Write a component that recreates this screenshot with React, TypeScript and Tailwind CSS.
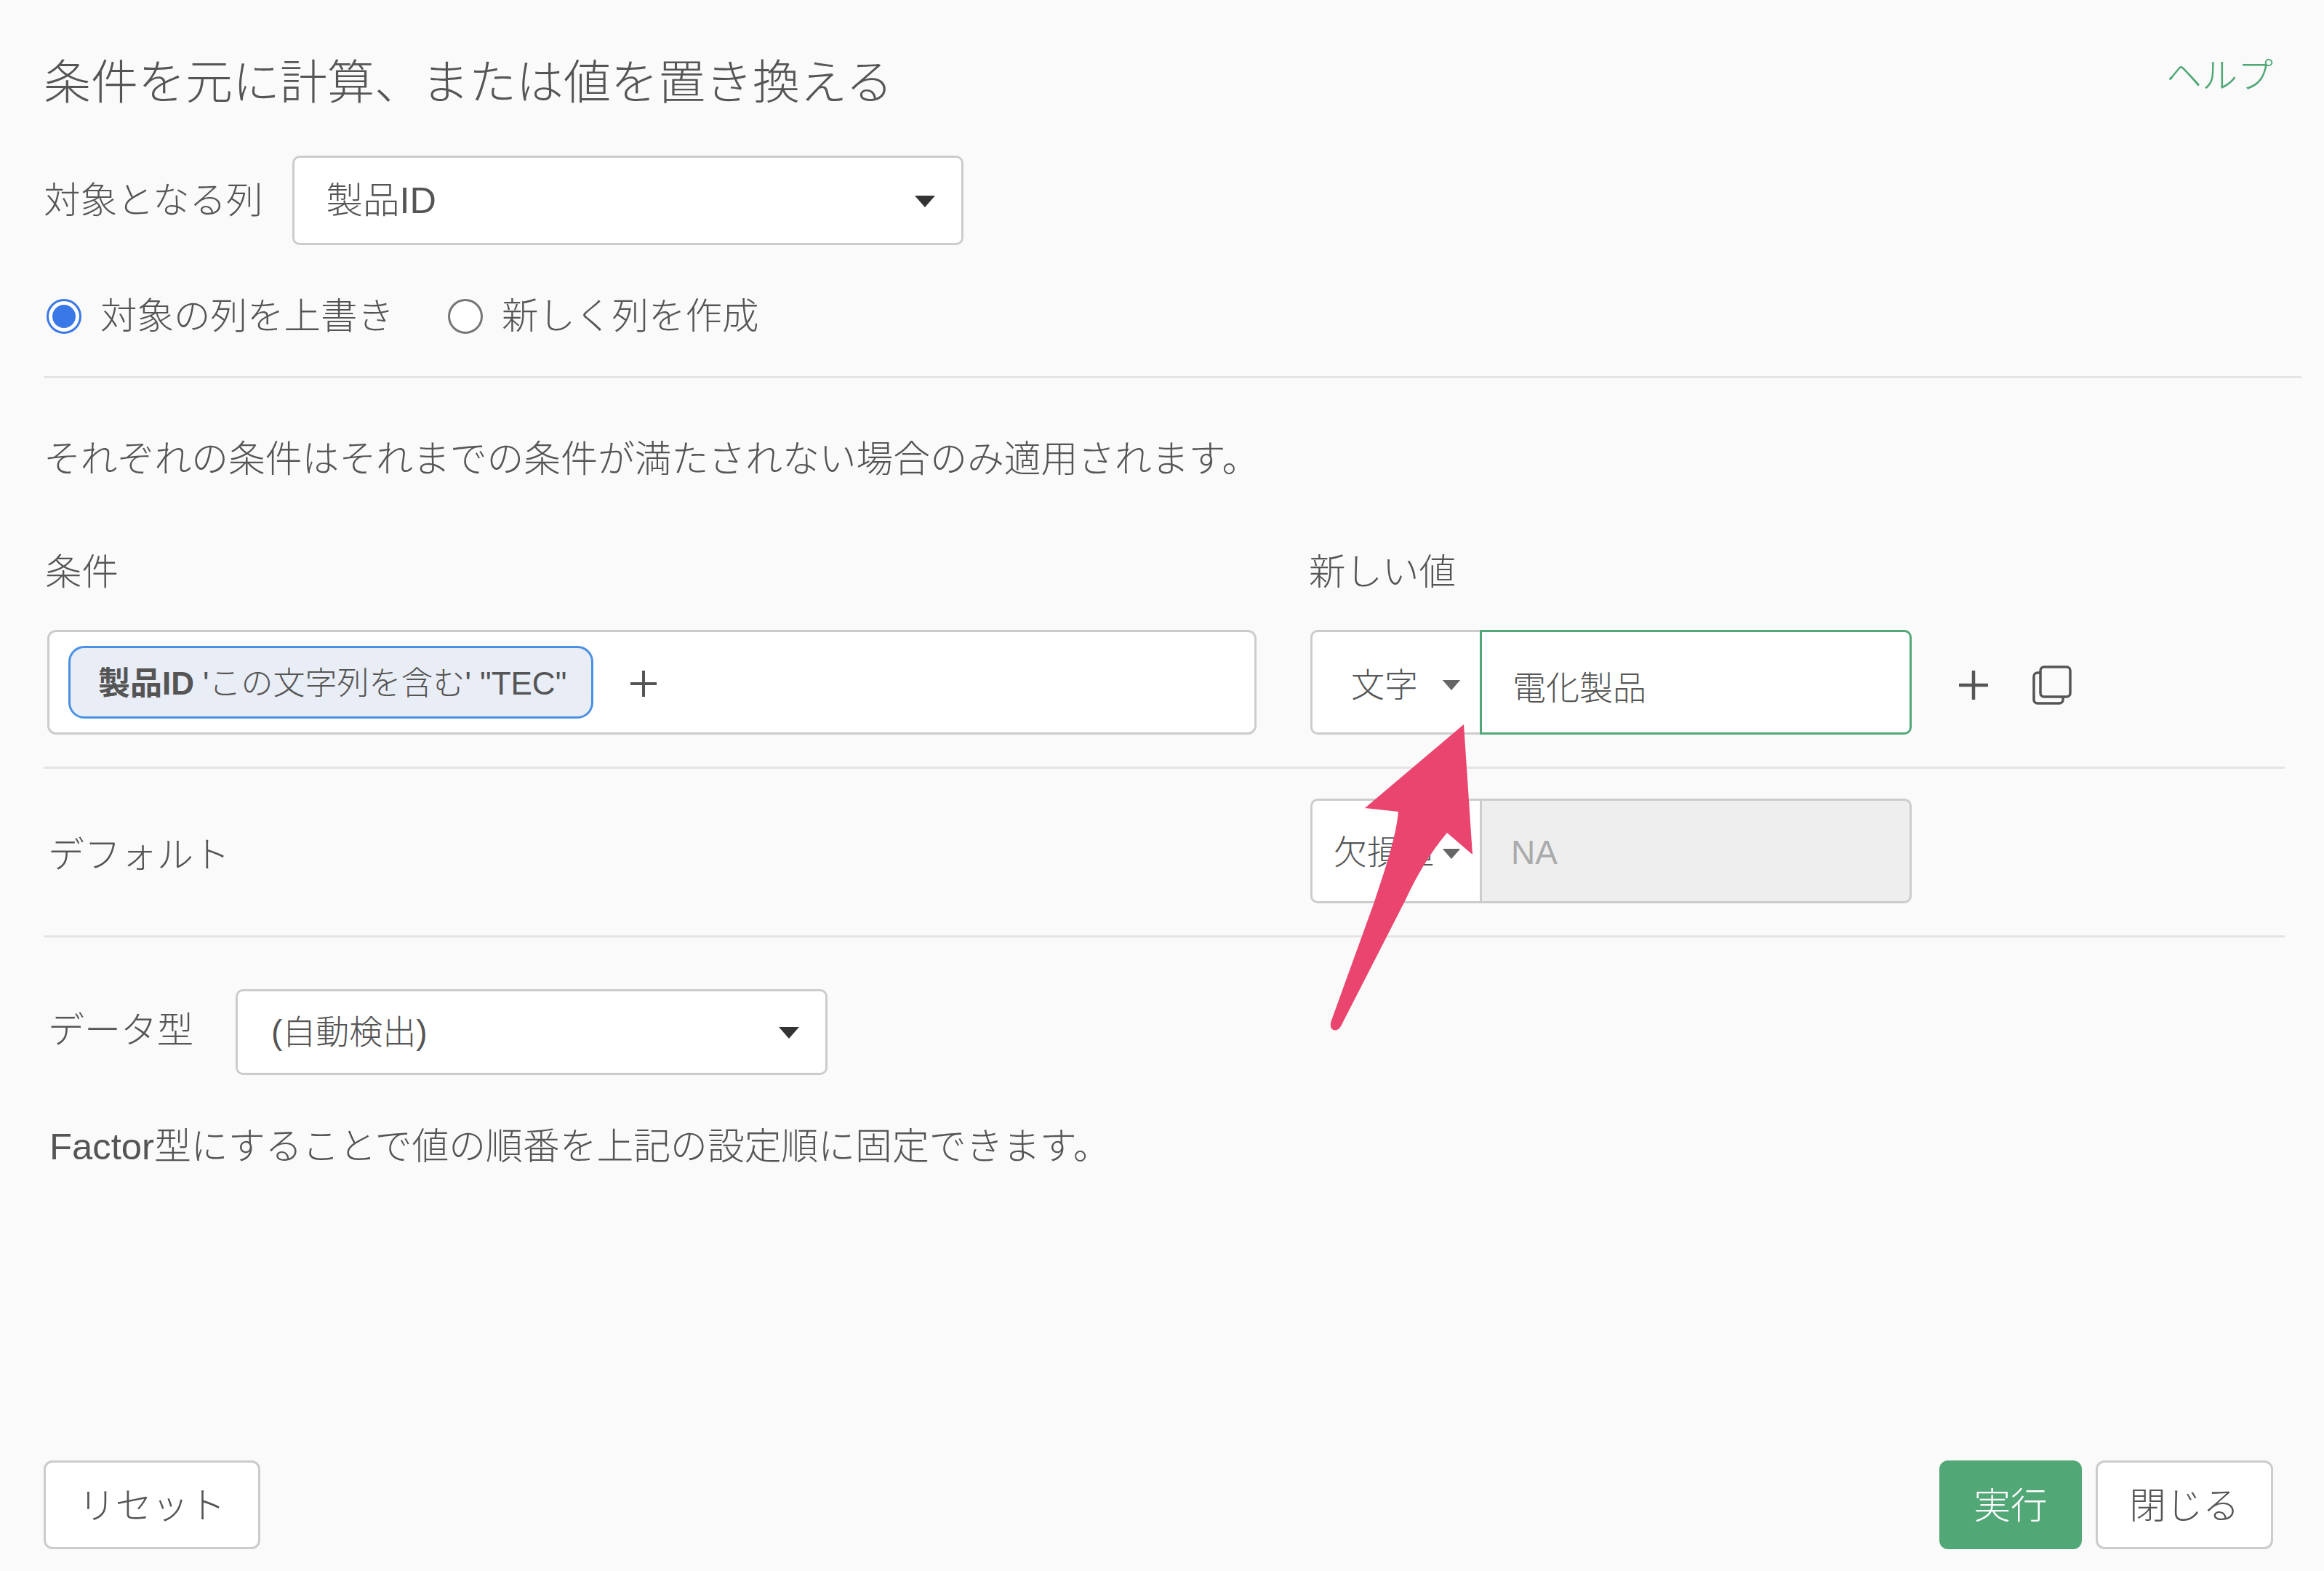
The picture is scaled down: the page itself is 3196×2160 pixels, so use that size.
import React from 'react';

const FONT = '"Liberation Sans", "Noto Sans CJK JP", sans-serif';

const Caret = ({ className = '' }: { className?: string }) => (
  <svg width="28" height="16" viewBox="0 0 28 16" className={className}>
    <polygon points="0,0 28,0 14,16" fill="currentColor" />
  </svg>
);

const Divider = ({ className = '' }: { className?: string }) => (
  <div className={`h-[3px] bg-[#e4e4e4] ${className}`} />
);

const Radio = ({ checked, label }: { checked?: boolean; label: string }) => (
  <div className="flex items-center gap-[26px]">
    <span
      className={`flex h-[48px] w-[48px] items-center justify-center rounded-full border-[3px] bg-white ${
        checked ? 'border-[#3b78e7]' : 'border-[#777777]'
      }`}
    >
      {checked && <span className="h-[32px] w-[32px] rounded-full bg-[#3b78e7]" />}
    </span>
    <span className="text-[50.5px] leading-[60px] font-light">{label}</span>
  </div>
);

const Select = ({ value, className = '' }: { value: string; className?: string }) => (
  <div
    className={`flex items-center justify-between rounded-[10px] border-[3px] border-[#cccccc] bg-white ${className}`}
  >
    <span className="font-light">{value}</span>
    <Caret className="mt-[2px] text-[#333333]" />
  </div>
);

const PlusIcon = ({ size, className = '' }: { size: number; className?: string }) => (
  <svg width={size} height={size} viewBox="0 0 40 40" className={className}>
    <path d="M20 0V40M0 20H40" stroke="currentColor" strokeWidth="4.5" fill="none" />
  </svg>
);

const CopyIcon = () => (
  <svg width="54" height="54" viewBox="0 0 54 54" fill="none" stroke="#555555" strokeWidth="3.5">
    <rect x="11" y="2" width="41" height="41" rx="5" />
    <path d="M11 10H7a5 5 0 0 0-5 5v32a5 5 0 0 0 5 5h30a5 5 0 0 0 5-5v-4" />
  </svg>
);

// Input group: type dropdown on the left, value field on the right
const ValueGroup = ({
  type,
  value,
  disabled,
}: {
  type: string;
  value: string;
  disabled?: boolean;
}) => (
  <div className="flex h-[144px] w-[827px] text-[46px]">
    <div
      className={`relative flex w-[233px] items-center rounded-l-[10px] border-y-[3px] border-l-[3px] border-[#cccccc] bg-white ${
        disabled ? 'pl-[29px] pt-[5px]' : 'pl-[53px] pt-[8px]'
      }`}
    >
      <span className="font-light">{type}</span>
      <Caret className="absolute top-[66px] right-[26px] h-[14px] w-[26px] text-[#666666]" />
    </div>
    {disabled ? (
      <div className="flex flex-1 items-center rounded-r-[10px] border-y-[3px] border-x-[3px] border-[#cccccc] bg-[#eeeeee] pl-[40px] pt-[4px] text-[#aaaaaa]">
        <span className="font-light">{value}</span>
      </div>
    ) : (
      <div className="flex flex-1 items-center rounded-r-[10px] border-[3px] border-[#52a777] bg-white pl-[42px] pt-[17px]">
        <span className="font-light">{value}</span>
      </div>
    )}
  </div>
);

export default function App() {
  return (
    <div
      className="relative flex h-[2160px] w-[3196px] flex-col overflow-hidden bg-[#fafafa] pl-[60px] text-[#555555]"
      style={{ fontFamily: FONT }}
    >
      {/* Header */}
      <div className="flex items-start justify-between pr-[70px] pt-[82px]">
        <h1 className="text-[65px] leading-[64px] font-light">条件を元に計算、または値を置き換える</h1>
        <a className="-mt-[8px] text-[49px] leading-[60px] font-light text-[#4fa876]">ヘルプ</a>
      </div>

      {/* Target column */}
      <div className="mt-[68px] flex items-center gap-[40px]">
        <span className="text-[50.5px] font-light">対象となる列</span>
        <Select value="製品ID" className="h-[123px] w-[923px] pl-[44px] pr-[36px] text-[50.5px]" />
      </div>

      <div className="mt-[68px] flex items-center gap-[74px] pl-[4px]">
        <Radio checked label="対象の列を上書き" />
        <Radio label="新しく列を作成" />
      </div>

      <Divider className="mt-[52px] w-[3105px]" />

      <p className="mt-[82px] text-[50.8px] leading-[60px] font-light">
        それぞれの条件はそれまでの条件が満たされない場合のみ適用されます。
      </p>

      {/* Condition table */}
      <div className="mt-[95px] flex text-[50.5px] leading-[60px] font-light">
        <span className="w-[1740px] pl-[2px]">条件</span>
        <span>新しい値</span>
      </div>

      <div className="mt-[49px] flex items-center pl-[5px]">
        <div className="flex h-[144px] w-[1663px] items-center rounded-[12px] border-[3px] border-[#cccccc] bg-white pl-[26px]">
          <div className="flex h-[100px] w-[722px] items-center rounded-[22px] border-[3px] border-[#4a90e2] bg-[#e9edf6] pl-[38px] pt-[3px] text-[44px] whitespace-nowrap">
            <span className="font-bold">製品ID</span>
            <span className="ml-[12px] font-light">'この文字列を含む' "TEC"</span>
          </div>
          <PlusIcon size={36} className="mt-[3px] ml-[51px] text-[#555555]" />
        </div>
        <div className="ml-[74px]">
          <ValueGroup type="文字" value="電化製品" />
        </div>
        <PlusIcon size={40} className="mt-[8px] ml-[65px] text-[#555555]" />
        <div className="mt-[8px] ml-[61px]">
          <CopyIcon />
        </div>
      </div>

      <Divider className="mt-[44px] w-[3082px]" />

      <div className="mt-[41px] flex items-center pl-[6px]">
        <span className="w-[1736px] pt-[12px] text-[50px] font-light">デフォルト</span>
        <ValueGroup type="欠損値" value="NA" disabled />
      </div>

      <Divider className="mt-[44px] w-[3082px]" />

      {/* Data type */}
      <div className="mt-[71px] flex items-center gap-[58px] pl-[6px]">
        <span className="pb-[4px] text-[50px] font-light">データ型</span>
        <Select value="(自動検出)" className="h-[118px] w-[814px] pl-[46px] pr-[36px] text-[46px]" />
      </div>

      <p className="mt-[69px] pl-[8px] text-[50.8px] leading-[60px] font-light">
        Factor型にすることで値の順番を上記の設定順に固定できます。
      </p>

      {/* Footer */}
      <div className="mt-auto mb-[30px] flex items-center justify-between pr-[70px] text-[50.5px]">
        <button className="h-[122px] w-[298px] rounded-[12px] border-[3px] border-[#cccccc] bg-white pt-[4px] font-light">
          リセット
        </button>
        <div className="flex gap-[19px]">
          <button className="h-[122px] w-[196px] rounded-[12px] bg-[#52a777] pt-[4px] font-light text-white">実行</button>
          <button className="h-[122px] w-[244px] rounded-[12px] border-[3px] border-[#cccccc] bg-white pt-[4px] font-light">
            閉じる
          </button>
        </div>
      </div>

      {/* Annotation arrow drawn over the form */}
      <svg className="absolute top-0 left-0" width="3196" height="2160" viewBox="0 0 3196 2160">
        <path
          d="M2013 996 L2025 1175 L1990 1145 C1965 1175 1948 1205 1933 1237 L1844 1411 C1838 1421 1826 1417 1831 1403 L1890 1240 C1905 1195 1920 1150 1923 1116 L1877 1111 Z"
          fill="#ea456f"
        />
      </svg>
    </div>
  );
}
